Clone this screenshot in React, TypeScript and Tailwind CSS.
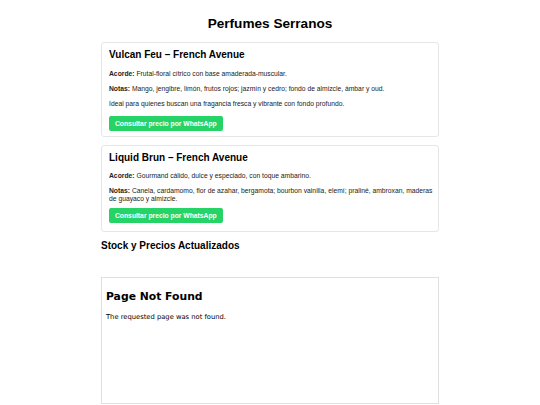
import React from "react";

const btn =
  "block w-fit bg-[#25d366] text-white font-bold text-[6.75px] leading-[15px] h-[15px] px-[6px] rounded-[2px]";

export default function App() {
  return (
    <div className="min-h-[405px] bg-white text-[#222] font-['Liberation_Sans',Arial,sans-serif]">
      <div className="w-[338px] mx-auto">
        <h1 className="text-center font-bold text-[13.6px] leading-[16px] text-black pt-[16px] mb-[10px]">
          Perfumes Serranos
        </h1>
        <div className="border border-[#e6e6e6] rounded-[3px] pl-[7px] pr-[5px] pt-[6px] pb-[5px] mb-[8px]">
          <h2 className="font-bold text-[10px] leading-[12px] text-black mb-[9px]">
            Vulcan Feu – French Avenue
          </h2>
          <p className="text-[6.75px] leading-[8px] mb-[7px]">
            <b>Acorde:</b> Frutal-floral cítrico con base amaderada-muscular.
          </p>
          <p className="text-[6.75px] leading-[8px] mb-[7px]">
            <b>Notas:</b> Mango, jengibre, limón, frutos rojos; jazmín y cedro; fondo de almizcle, ámbar y oud.
          </p>
          <p className="text-[6.75px] leading-[8px] mb-[8px]">
            Ideal para quienes buscan una fragancia fresca y vibrante con fondo profundo.
          </p>
          <span className={btn}>Consultar precio por WhatsApp</span>
        </div>
        <div className="border border-[#e6e6e6] rounded-[3px] pl-[7px] pr-[4px] pt-[6px] pb-[8px] mb-[8px]">
          <h2 className="font-bold text-[10px] leading-[12px] text-black mb-[8px]">
            Liquid Brun – French Avenue
          </h2>
          <p className="text-[6.75px] leading-[8px] mb-[7px]">
            <b>Acorde:</b> Gourmand cálido, dulce y especiado, con toque ambarino.
          </p>
          <p className="text-[6.75px] leading-[8px] mb-[5px]">
            <b>Notas:</b> Canela, cardamomo, flor de azahar, bergamota; bourbon vainilla, elemí; praliné, ambroxan, maderas de guayaco y almizcle.
          </p>
          <span className={btn}>Consultar precio por WhatsApp</span>
        </div>
        <h3 className="font-bold text-[10px] leading-[12px] text-black mt-[2px] mb-[25px]">
          Stock y Precios Actualizados
        </h3>
        <div className="border border-[#e0e0e0] h-[127px] px-[4px] font-['DejaVu_Sans',Verdana,sans-serif] text-black">
          <h1 className="font-bold text-[10.8px] leading-[13px] mt-[12px] mb-[10px]">Page Not Found</h1>
          <p className="text-[6.75px] leading-[8px]">The requested page was not found.</p>
        </div>
      </div>
    </div>
  );
}
